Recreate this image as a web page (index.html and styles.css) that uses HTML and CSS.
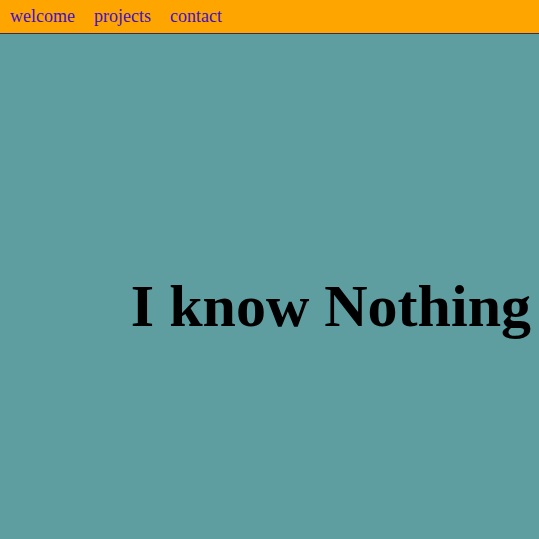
FILE: index.html
```html
<!DOCTYPE html>
<html>
<head>
<meta charset="utf-8">
<link rel="stylesheet" href="styles.css">
</head>
<body>
<nav class="nav">
  <a class="nav-link" href="#">welcome</a>
  <a class="nav-link" href="#">projects</a>
  <a class="nav-link" href="#">contact</a>
</nav>
<main class="hero">
  <h1 class="title">I know Nothing</h1>
</main>
</body>
</html>
```
FILE: styles.css
```css
html, body {
  margin: 0;
  padding: 0;
  height: 100%;
}
body {
  background: #5f9ea0;
  font-family: "Liberation Serif", "Times New Roman", serif;
}
.nav {
  background: #ffa500;
  height: 33px;
  border-bottom: 1px solid #3b2a5c;
  display: flex;
  align-items: center;
  gap: 19px;
  padding: 0 10px;
}
.nav-link {
  color: #4210c8;
  text-decoration: none;
  font-size: 18px;
}
.hero {
  display: flex;
  justify-content: flex-end;
  align-items: center;
  height: calc(100% - 34px);
  padding: 40px 8px 0;
  box-sizing: border-box;
}
.title {
  margin: 0;
  font-size: 60px;
  font-weight: bold;
  color: #000;
}
```
